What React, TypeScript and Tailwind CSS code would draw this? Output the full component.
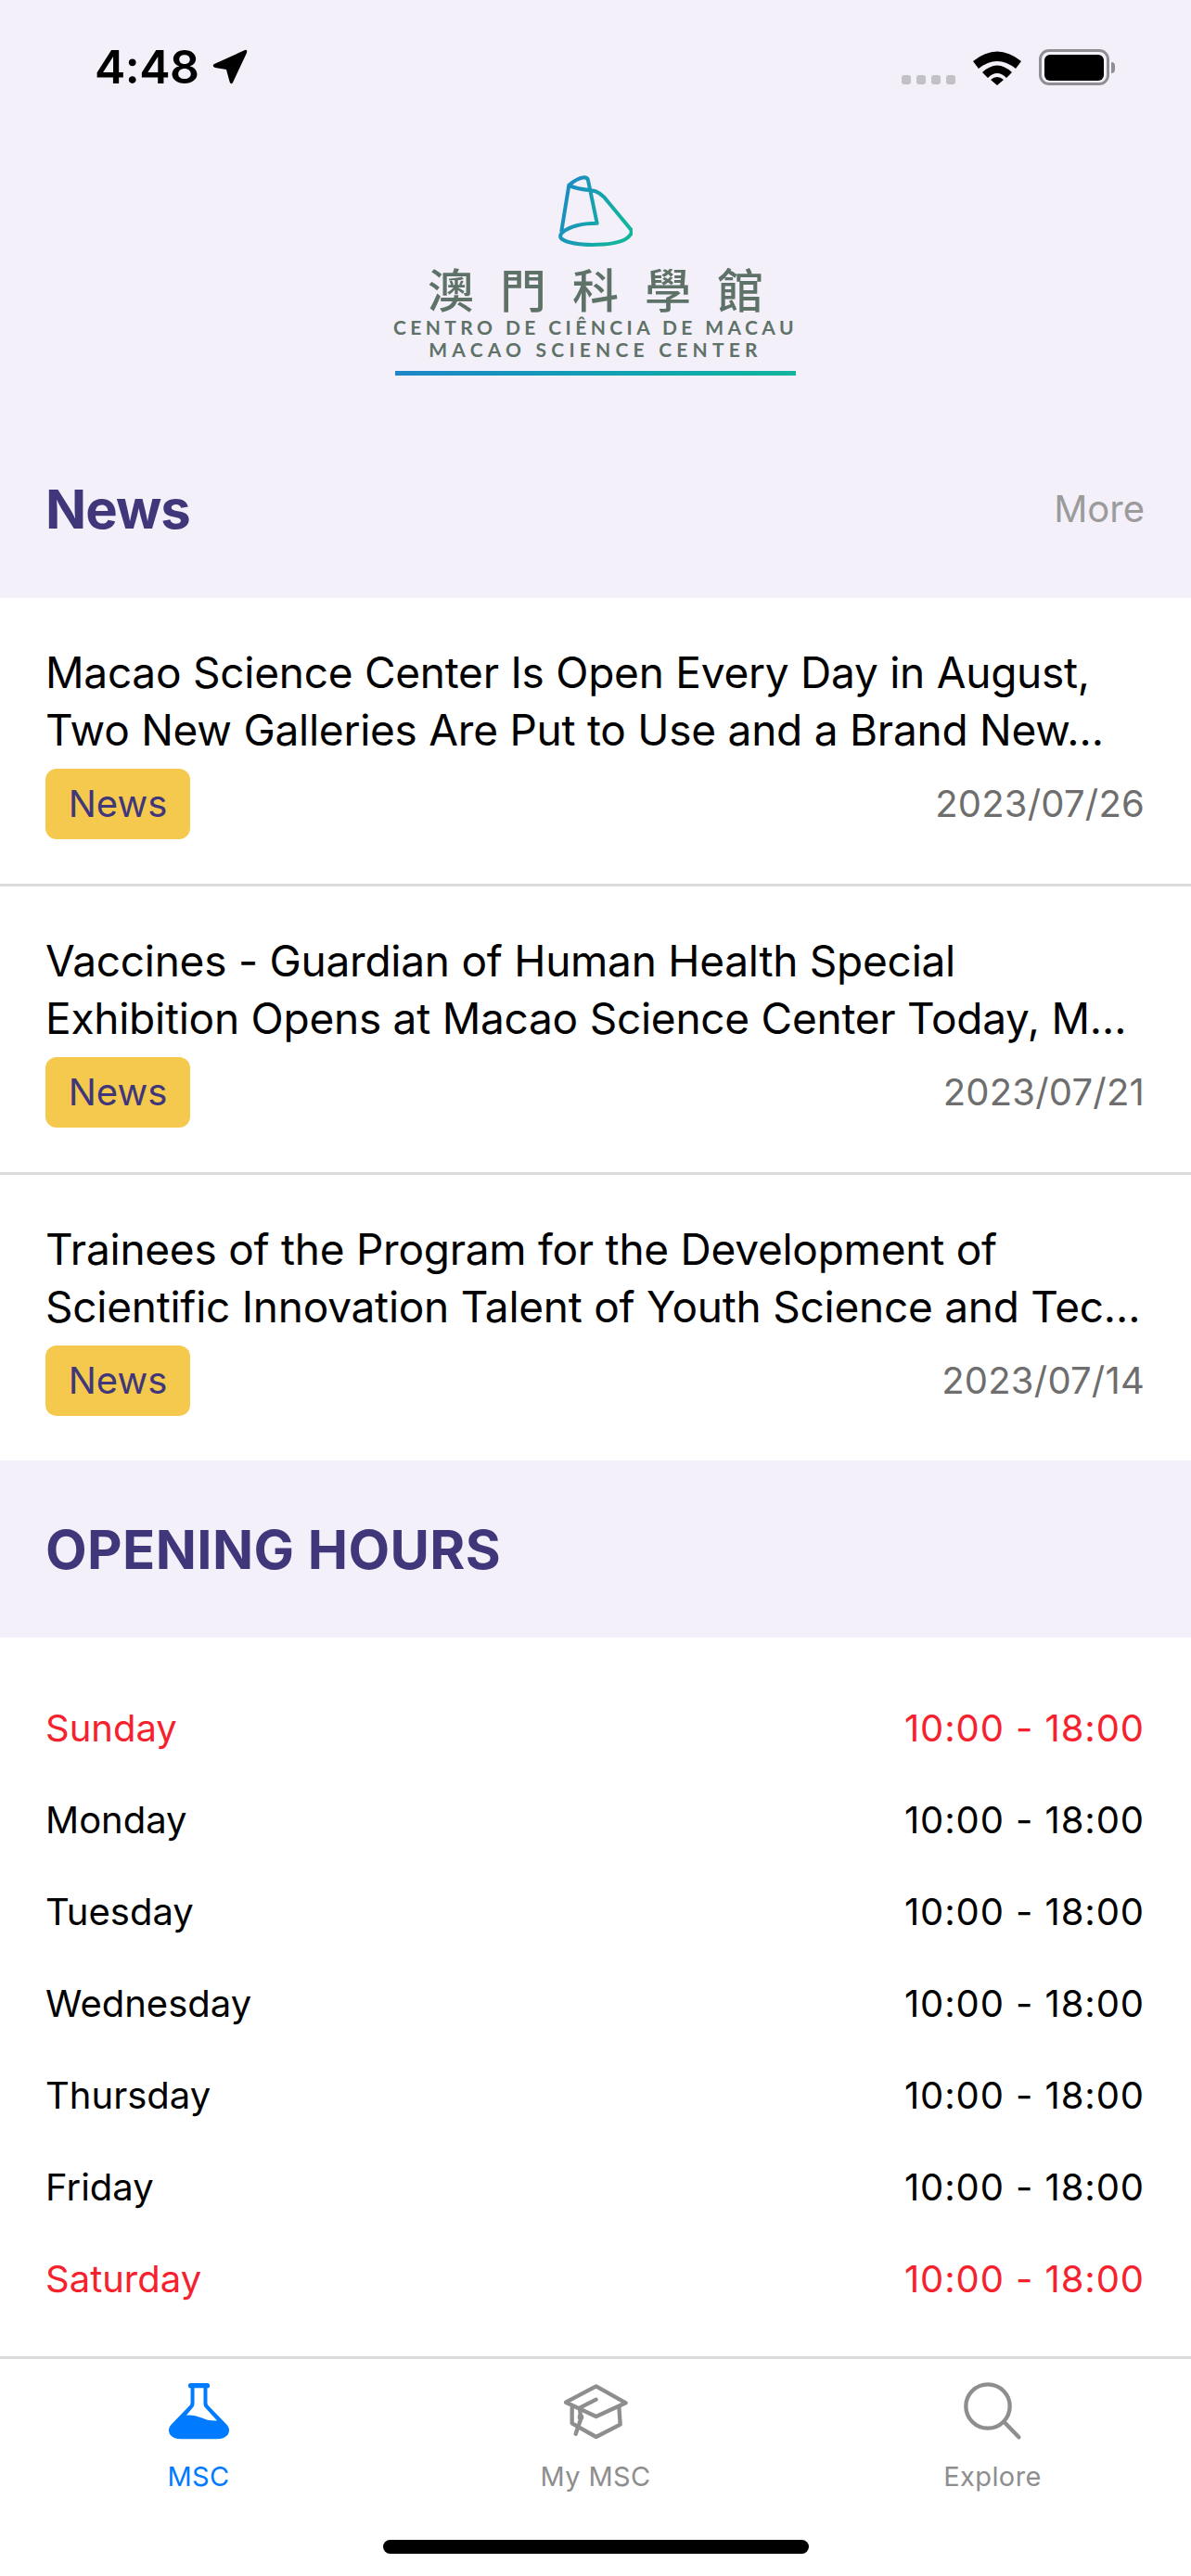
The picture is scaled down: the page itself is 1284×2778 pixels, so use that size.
import React from "react"

const news = [
  {
    lines: ["Macao Science Center Is Open Every Day in August,", "Two New Galleries Are Put to Use and a Brand New…"],
    date: "2023/07/26",
  },
  {
    lines: ["Vaccines - Guardian of Human Health Special", "Exhibition Opens at Macao Science Center Today, M…"],
    date: "2023/07/21",
  },
  {
    lines: ["Trainees of the Program for the Development of", "Scientific Innovation Talent of Youth Science and Tec…"],
    date: "2023/07/14",
  },
]

const hours = [
  { day: "Sunday", red: true },
  { day: "Monday", red: false },
  { day: "Tuesday", red: false },
  { day: "Wednesday", red: false },
  { day: "Thursday", red: false },
  { day: "Friday", red: false },
  { day: "Saturday", red: true },
]

function StatusBar() {
  return (
    <div className="flex h-[145px] items-start justify-between pl-[102px] pr-[82px] pt-[45px]">
      <div className="flex items-center gap-[13px] text-black">
        <span className="text-[50px] leading-[54px] font-semibold tracking-[-0.5px]">4:48</span>
        <svg viewBox="0 0 40 40" className="h-[40px] w-[40px]">
          <path d="M3 17 L36 2 Q39 1 38 5 L23 37 Q21 40 19.500 36 L16 23 L4 21 Q0 19 3 17Z" fill="black" />
        </svg>
      </div>
      <div className="flex items-start gap-[19px] pt-[8px]">
        <div className="mt-[28px] flex gap-[6px]">
          <div className="h-[10px] w-[10px] rounded-[3px] bg-[#c2c1c6]" />
          <div className="h-[10px] w-[10px] rounded-[3px] bg-[#c2c1c6]" />
          <div className="h-[10px] w-[10px] rounded-[3px] bg-[#c2c1c6]" />
          <div className="h-[10px] w-[10px] rounded-[3px] bg-[#c2c1c6]" />
        </div>
        <svg viewBox="0 0 52 38" className="mt-[1px] h-[38px] w-[52px]">
          <path d="M0 12 Q26 -9 52 12 L46 20 Q26 4 6 20Z" fill="black" />
          <path d="M10 24 Q26 9 42 24 L36 30 Q26 20 16 30Z" fill="black" />
          <path d="M19 32 Q26 26 33 32 L26 38Z" fill="black" />
        </svg>
        <div className="flex items-center">
          <div className="flex h-[39px] w-[76px] items-center justify-center rounded-[11px] border-[3px] border-[#8f8e93]">
            <div className="h-[28px] w-[64px] rounded-[6px] bg-black" />
          </div>
          <div className="ml-[2px] h-[12px] w-[4px] rounded-r-full bg-[#8f8e93]" />
        </div>
      </div>
    </div>
  )
}

function Logo() {
  return (
    <div className="flex flex-col items-center">
      <svg viewBox="0 0 240 230" className="h-[77px] w-[80px]">
        <defs>
          <linearGradient id="coneStroke" x1="0" y1="0" x2="1" y2="0.4">
            <stop offset="0" stopColor="#1d86c8" />
            <stop offset="1" stopColor="#12b59c" />
          </linearGradient>
        </defs>
        <path
          d="M34 32 Q60 8 85 6 Q95 6 97 20 L125 155 Q50 155 12 185 Q2 195 10 205 Q40 226 125 224 Q215 222 234 190 Q240 178 230 170 L160 85 Q135 50 105 48 M34 32 L10 180 M34 32 Q60 44 105 48"
          fill="none"
          stroke="url(#coneStroke)"
          strokeWidth="12"
          strokeLinejoin="round"
          strokeLinecap="round"
        />
      </svg>
      <div
        className="mt-[17px] flex h-[54px] w-[362px] items-center justify-between text-[50px] leading-[54px] font-medium text-[#5f7268]"
        style={{ fontFamily: '"Noto Sans CJK TC", sans-serif' }}
      >
        <span>澳</span>
        <span>門</span>
        <span>科</span>
        <span>學</span>
        <span>館</span>
      </div>
      <div className="mt-[4px] font-['Lato',sans-serif] text-[21px] leading-[24px] font-bold tracking-[4.4px] whitespace-nowrap text-[#5f7268]">
        CENTRO DE CIÊNCIA DE MACAU
      </div>
      <div className="font-['Lato',sans-serif] text-[21px] leading-[24px] font-bold tracking-[5.2px] whitespace-nowrap text-[#5f7268]">
        MACAO SCIENCE CENTER
      </div>
      <div className="mt-[11px] h-[5px] w-[432px] bg-gradient-to-r from-[#1d86c8] to-[#12b59c]" />
    </div>
  )
}

function Flask() {
  return (
    <svg viewBox="60 45 206 190" className="h-[63px] w-[69px]">
      <path d="M136 48 H190 Q198 48 198 56 Q198 64 190 64 H136 Q128 64 128 56 Q128 48 136 48Z" fill="#007aff" />
      <path
        d="M136 60 V112 Q136 118 131 123 L72 184 Q60 198 68 214 Q78 230 105 230 H220 Q248 230 258 214 Q266 198 254 184 L195 123 Q190 118 190 112 V60 H178 V115 Q178 123 184 129 L222 170 Q195 172 170 160 Q145 150 122 153 L142 129 Q148 123 148 115 V60Z"
        fill="#007aff"
        fillRule="evenodd"
      />
    </svg>
  )
}

function Cap() {
  return (
    <svg viewBox="48 50 216 180" className="h-[60px] w-[72px]" fill="none" stroke="#8e8e8e" strokeWidth="13" strokeLinejoin="round" strokeLinecap="round">
      <path d="M158 60 L254 114 L158 158 L60 112Z" />
      <path d="M158 103 L105 130 L108 160" />
      <path d="M232 126 L236 184 L158 224 L80 180 L80 130" />
      <path d="M108 168 L92 214" />
      <circle cx="108" cy="160" r="8" fill="#8e8e8e" strokeWidth="4" />
    </svg>
  )
}

function Search() {
  return (
    <svg viewBox="56 44 192 192" className="h-[64px] w-[64px]" fill="none" stroke="#8e8e8e" strokeWidth="13" strokeLinecap="round">
      <circle cx="137" cy="125" r="71" />
      <path d="M190 176 L237 225" />
    </svg>
  )
}

function Tab({ icon, label, active }: { icon: React.ReactNode; label: string; active?: boolean }) {
  return (
    <div className="flex flex-1 flex-col items-center">
      <div className="flex h-[68px] items-center justify-center">{icon}</div>
      <div className={`mt-[20px] text-[29px] leading-[34px] tracking-[0.4px] ${active ? "text-[#007aff]" : "text-[#8e8e8e]"}`}>{label}</div>
    </div>
  )
}

export default function App() {
  return (
    <main className="flex h-[2778px] w-[1284px] flex-col overflow-hidden bg-white font-['Inter',sans-serif]">
      {/* Top */}
      <section className="h-[645px] bg-[#f3f0fa]">
        <StatusBar />
        <div className="mt-[44px]">
          <Logo />
        </div>
        <div className="mt-[109px] flex items-center justify-between pl-[49px] pr-[50px]">
          <h1 className="text-[58px] leading-[70px] font-bold tracking-[-1px] text-[#40377a]">News</h1>
          <span className="text-[40px] leading-[50px] text-[#9b9b9b]">More</span>
        </div>
      </section>

      {/* News list */}
      <section>
        {news.map((item, i) => (
          <div key={item.date} className={`pl-[49px] pr-[50px] pt-[49px] ${i < 2 ? "h-[311px] border-b-[3px] border-[#dcdcdc]" : "h-[308px]"}`}>
            {item.lines.map((line) => (
              <p key={line} className="text-[46px] leading-[62px] tracking-[-0.25px] whitespace-nowrap text-black">
                {line}
              </p>
            ))}
            <div className="mt-[11px] flex items-center justify-between">
              <span className="flex h-[76px] w-[156px] items-center justify-center rounded-[12px] bg-[#f5c94e] text-[40px] text-[#40377a]">News</span>
              <span className="text-[40px] leading-[50px] tracking-[0.2px] text-[#6e6e6e]">{item.date}</span>
            </div>
          </div>
        ))}
      </section>

      {/* Opening hours */}
      <section className="flex h-[191px] items-center bg-[#f3f0fa] pl-[49px]">
        <h2 className="text-[58px] leading-[70px] font-bold tracking-[0.4px] text-[#40377a]">OPENING HOURS</h2>
      </section>

      <section className="flex-1 pl-[49px] pr-[50px] pt-[48px]">
        {hours.map((row) => (
          <div key={row.day} className={`flex h-[99px] items-center justify-between text-[40px] ${row.red ? "text-[#f5222d]" : "text-black"}`}>
            <span>{row.day}</span>
            <span className="tracking-[0.9px]">10:00 - 18:00</span>
          </div>
        ))}
      </section>

      {/* Tab bar */}
      <nav className="relative h-[237px] border-t-[3px] border-[#dcdcdc] bg-white pt-[22px]">
        <div className="flex">
          <Tab icon={<Flask />} label="MSC" active />
          <Tab icon={<Cap />} label="My MSC" />
          <Tab icon={<Search />} label="Explore" />
        </div>
        <div className="absolute bottom-[24px] left-[413px] h-[15px] w-[459px] rounded-full bg-black" />
      </nav>
    </main>
  )
}
